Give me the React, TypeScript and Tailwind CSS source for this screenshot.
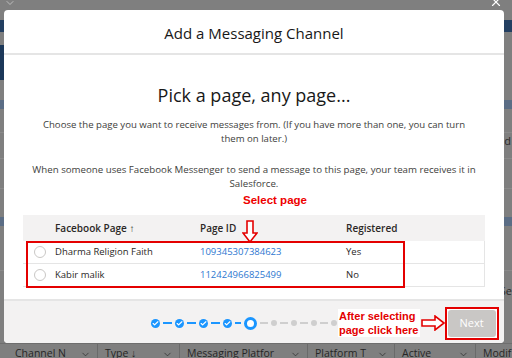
import { Check, ChevronDown, X } from "lucide-react";

const pages = [
    { name: "Dharma Religion Faith", id: "109345307384623", registered: "Yes" },
    { name: "Kabir malik", id: "112424966825499", registered: "No" },
];

const columns = [
    { label: "Channel N", w: "w-[98px]", pl: "pl-[15px]" },
    { label: "Type ↓", w: "w-[82px]", pl: "pl-[7px]" },
    { label: "Messaging Platfor", w: "w-[128px]", pl: "pl-[7px]" },
    { label: "Platform T", w: "w-[87px]", pl: "pl-[7px]" },
    { label: "Active", w: "w-[81px]", pl: "pl-[7px]" },
    { label: "Modif", w: "w-[60px]", pl: "pl-[7px]" },
];

function DownArrow() {
    return (
        <svg width="16" height="23" viewBox="0 0 16 23" className="block">
            <path
                d="M5 1 H11 V13 H15 L8 22 L1 13 H5 Z"
                fill="white"
                stroke="#e40000"
                strokeWidth="1.6"
            />
        </svg>
    );
}

function RightArrow() {
    return (
        <svg width="24" height="16" viewBox="0 0 24 16" className="block">
            <path
                d="M1 5 H14 V1 L23 8 L14 15 V11 H1 Z"
                fill="white"
                stroke="#e40000"
                strokeWidth="1.6"
            />
        </svg>
    );
}

function Progress() {
    return (
        <div className="flex shrink-0 items-center">
            {[0, 1, 2, 3].map((i) => (
                <div key={i} className="flex items-center">
                    <div className="flex h-[9px] w-[9px] items-center justify-center rounded-full bg-[#1b96ff]">
                        <Check className="h-[7px] w-[7px] text-white" strokeWidth={4} />
                    </div>
                    <div className={`mx-[3px] h-[2px] bg-[#1b96ff] ${i === 3 ? "w-[6px]" : "w-[9px]"}`} />
                </div>
            ))}
            <div className="h-[13px] w-[13px] rounded-full border-[3px] border-[#1b96ff] bg-white" />
            {[0, 1, 2, 3].map((i) => (
                <div key={i} className="flex items-center">
                    <div className="mx-[3px] h-[2px] w-[8px] bg-[#cfcfcf]" />
                    <div className="h-[6px] w-[6px] rounded-full bg-[#cfcfcf]" />
                </div>
            ))}
        </div>
    );
}

export default function App() {
    return (
        <div className="relative h-[358px] w-[512px] overflow-hidden bg-[#7f7f7f] font-['Open_Sans',sans-serif]">
            {/* dimmed page behind the modal */}
            <div className="flex h-full flex-col">
                <div className="flex h-[20px] items-start pl-[4px] text-[#d0d0d0]">
                    <ChevronDown className="mt-[-3px] h-[12px] w-[12px]" strokeWidth={1.5} />
                </div>
                <div className="h-[12px] bg-[#233f61]" />
                <div className="h-[13px]" />
                <div className="flex h-[35px]">
                    <div className="w-[20px] bg-[#1c3859]" />
                </div>
                <div className="h-[20px]" />
                <div className="h-[9px] bg-[#5b6d85]" />
                <div className="h-[24px] border-b border-[#8a8a8a]" />
                <div className="flex h-[26px] justify-end border-b border-[#8a8a8a] pr-[1px] text-[11px] text-[#2a2a2a]">
                    <span>d</span>
                </div>
                <div className="h-[30px] border-b border-[#8a8a8a]" />
                <div className="h-[28px]" />
                <div className="h-[9px] bg-[#5b6d85]" />
                <div className="h-[45px] border-b border-[#8a8a8a]" />
                <div className="flex h-[28px] items-end justify-end text-[11px] text-[#2a2a2a]">
                    <span>Se</span>
                </div>
                <div className="flex-1" />
                <div className="flex h-[15px] border-t border-[#6e6e6e] text-[10.5px] text-[#262626]">
                    {columns.map((c) => (
                        <div
                            key={c.label}
                            className={`flex shrink-0 items-start justify-between overflow-hidden border-r border-[#6a6a6a] pt-[2px] ${c.w} ${c.pl}`}
                        >
                            <span className="whitespace-nowrap leading-[14px]">{c.label}</span>
                            <ChevronDown className="mr-[6px] mt-[3px] h-[11px] w-[11px] shrink-0" strokeWidth={1.5} />
                        </div>
                    ))}
                </div>
            </div>

            {/* close button */}
            <X className="absolute right-[9px] top-[-5px] h-[14px] w-[14px] text-white" strokeWidth={2} />

            {/* modal */}
            <div className="absolute left-[4px] top-[10px] flex h-[333px] w-[500px] flex-col overflow-hidden rounded-[4px] bg-white">
                <div className="flex h-[45px] shrink-0 items-center justify-center border-b-2 border-[#e5e5e5] pt-[3px] text-[15px] text-[#181818]">
                    Add a Messaging Channel
                </div>

                <div className="flex flex-1 flex-col items-center px-[19px] pt-[28px] text-[#3e3e3c]">
                    <h1 className="text-[18px] leading-[24px] text-[#181818]">Pick a page, any page...</h1>
                    <p className="mt-[11px] whitespace-nowrap text-center text-[9.6px] leading-[14px]">
                        Choose the page you want to receive messages from. (If you have more than one, you can turn
                        <br />
                        them on later.)
                    </p>
                    <p className="mt-[17px] whitespace-nowrap text-center text-[9.7px] leading-[14px]">
                        When someone uses Facebook Messenger to send a message to this page, your team receives it in
                        <br />
                        Salesforce.
                    </p>
                    <div className="mt-[1px] pl-[42px] font-['Liberation_Sans',sans-serif] text-[11.5px] font-bold leading-[16px] text-[#ee0000]">
                        Select page
                    </div>

                    <div className="relative mt-[7px] w-full text-[9.5px]">
                        <div className="flex h-[26px] items-center bg-[#f3f2f2] text-[10px] font-semibold text-[#2b2826]">
                            <div className="w-[32px]" />
                            <div className="w-[145px]">Facebook Page ↑</div>
                            <div className="w-[146px]">Page ID</div>
                            <div>Registered</div>
                        </div>
                        {pages.map((p) => (
                            <div
                                key={p.id}
                                className="flex h-[23px] items-center border-b border-r border-[#e5e5e5] text-[#2b2826]"
                            >
                                <div className="flex w-[32px] justify-center pl-[2px]">
                                    <div className="h-[12px] w-[12px] rounded-full border border-[#c9c7c5] bg-white" />
                                </div>
                                <div className="w-[145px]">{p.name}</div>
                                <div className="w-[146px] text-[#2e77d0]">{p.id}</div>
                                <div>{p.registered}</div>
                            </div>
                        ))}

                        {/* annotations */}
                        <div className="absolute left-[219px] top-[5px]">
                            <DownArrow />
                        </div>
                        <div className="absolute left-[3px] top-[26px] h-[47px] w-[379px] border-2 border-[#e40000]" />
                    </div>
                </div>

                <div className="flex h-[44px] shrink-0 items-center border-t-2 border-[#e5e5e5] bg-[#f3f2f2] pl-[147px] pt-[2px]">
                    <Progress />
                    <div className="ml-[1px] flex shrink-0 flex-col whitespace-nowrap bg-white px-[1px] font-['Liberation_Sans',sans-serif] text-[11px] font-bold leading-[14px] text-[#e40000]">
                        <span>After selecting</span>
                        <span>page click here</span>
                    </div>
                    <div className="ml-[1px] shrink-0">
                        <RightArrow />
                    </div>
                    <div className="flex h-[33px] w-[54px] shrink-0 items-center justify-center border-2 border-[#e40000] bg-white p-[1px]">
                        <div className="flex h-full w-full items-center justify-center rounded-[3px] bg-[#c9c7c5] text-[11px] text-white">
                            Next
                        </div>
                    </div>
                </div>
            </div>
        </div>
    );
}
